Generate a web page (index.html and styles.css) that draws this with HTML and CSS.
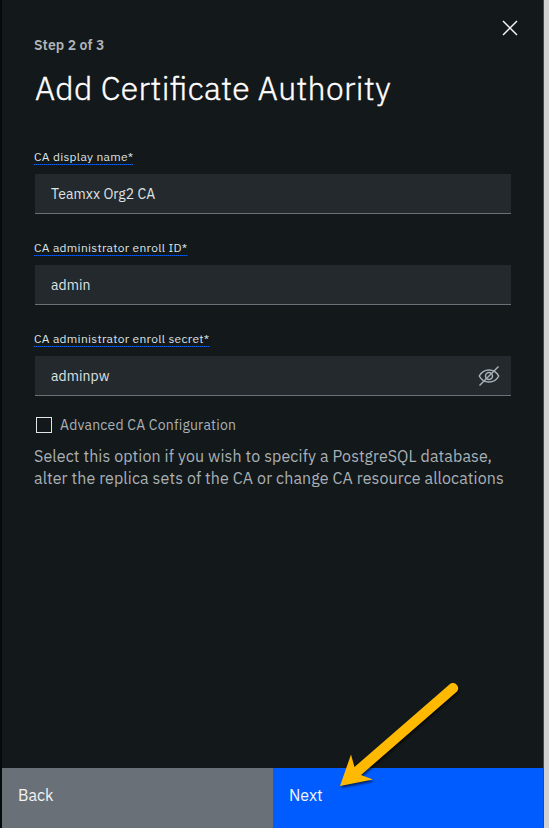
FILE: index.html
```html
<!DOCTYPE html>
<html lang="en">
<head>
<meta charset="utf-8">
<title>Add Certificate Authority</title>
<link rel="stylesheet" href="styles.css">
</head>
<body>
<main class="panel">
  <button class="close" aria-label="Close"><svg width="16" height="16" viewBox="0 0 16 16"><path d="M1 1L15 15M15 1L1 15" stroke="#f3f3f3" stroke-width="1.5" fill="none"/></svg></button>
  <div class="content">
    <p class="step">Step 2 of 3</p>
    <h1>Add Certificate Authority</h1>
    <div class="field">
      <label>CA display name*</label>
      <div class="input"><span>Teamxx Org2 CA</span></div>
    </div>
    <div class="field">
      <label>CA administrator enroll ID*</label>
      <div class="input"><span>admin</span></div>
    </div>
    <div class="field">
      <label>CA administrator enroll secret*</label>
      <div class="input"><span>adminpw</span>
        <svg class="eye" width="22" height="22" viewBox="0 0 22 22" fill="none" stroke="#a9b1b7" stroke-width="1.5"><path d="M1.3 11C3.4 6.8 7 4.900 11 4.900S18.600 6.800 20.700 11C18.600 15.200 15 17.100 11 17.100S3.400 15.200 1.300 11Z"/><circle cx="11" cy="11" r="3.500"/><path d="M1.500 20.500L20.500 1.500"/></svg>
      </div>
    </div>
    <div class="option"><span class="box"></span><span>Advanced CA Configuration</span></div>
    <p class="help">Select this option if you wish to specify a PostgreSQL database,<br>alter the replica sets of the CA or change CA resource allocations</p>
  </div>
  <footer><button class="back">Back</button><button class="next">Next</button></footer>
</main>
<svg class="arrow" width="130" height="120" viewBox="0 0 130 120"><path d="M9 116L20 84.500L23.500 97L119 14A5.200 5.200 0 0 1 126 21.500L30 105L42 109.500Z" fill="#ffb900"/></svg>
</body>
</html>
```
FILE: styles.css
```css
* { box-sizing: border-box; }
body {
  margin: 0;
  height: 828px;
  overflow: hidden;
  background: #d1d1d1;
  font-family: "IBM Plex Sans", Roboto, sans-serif;
  color: #dfe3e6;
}
p, h1 { margin: 0; }
button { border: 0; padding: 0; font: inherit; text-align: left; }
.panel {
  position: relative;
  display: flex;
  flex-direction: column;
  width: 544px;
  height: 828px;
  background: #13181a;
  border-left: 2px solid #070a0c;
  border-right: 1px solid #45494b;
}
.close {
  position: absolute;
  top: 20px;
  right: 25px;
  width: 16px;
  height: 16px;
  background: none;
}
.close svg { display: block; }
.content { flex: 1; padding: 36px 32px 0 33px; white-space: nowrap; }
.step {
  margin-left: -1px;
  font-size: 14px;
  line-height: 18px;
  font-weight: 600;
  letter-spacing: .1px;
  color: #aeb5ba;
}
h1 {
  height: 40px;
  margin: 14px 0 1px 0;
  font-size: 32px;
  line-height: 40px;
  font-weight: 300;
  letter-spacing: .36px;
  font-feature-settings: "liga" 1;
  -webkit-text-stroke: .4px #fff;
  color: #fff;
}
.field { height: 91px; padding-top: 41px; }
.field label {
  display: block;
  width: max-content;
  height: 15px;
  margin-left: -1px;
  background: linear-gradient(90deg, #0062ff 50%, #10357a 50%) 0 14px / 2px 1px repeat-x;
  font-size: 12px;
  line-height: 14px;
  letter-spacing: .3px;
}
.input {
  display: flex;
  align-items: center;
  justify-content: space-between;
  height: 40px;
  margin-top: 9px;
  padding: 0 11px 0 16px;
  background: #23292c;
  border-bottom: 1px solid #697077;
  font-size: 14px;
  letter-spacing: .06px;
}
.eye { display: block; }
.option {
  display: flex;
  align-items: center;
  height: 18px;
  margin-top: 34px;
  font-size: 14px;
  letter-spacing: .21px;
  color: #a9b1b7;
}
.box {
  width: 16px;
  height: 16px;
  margin: 0 8px 0 1px;
  border: 1px solid #e3e5e6;
}
.help {
  margin: 11px 0 0 -1px;
  font-size: 16px;
  line-height: 22px;
  letter-spacing: .11px;
  color: #a9b1b7;
}
footer { display: flex; height: 60px; }
footer button {
  flex: 1;
  height: 60px;
  padding: 0 16px 6px;
  font-size: 16px;
  color: #f3f4f5;
}
footer .back { flex: 0 0 271px; background: #697077; }
.next { background: #005cff; }
.arrow {
  position: absolute;
  left: 331px;
  top: 670px;
  filter: drop-shadow(1px 2px 1px rgba(0, 0, 0, .6));
}
```
